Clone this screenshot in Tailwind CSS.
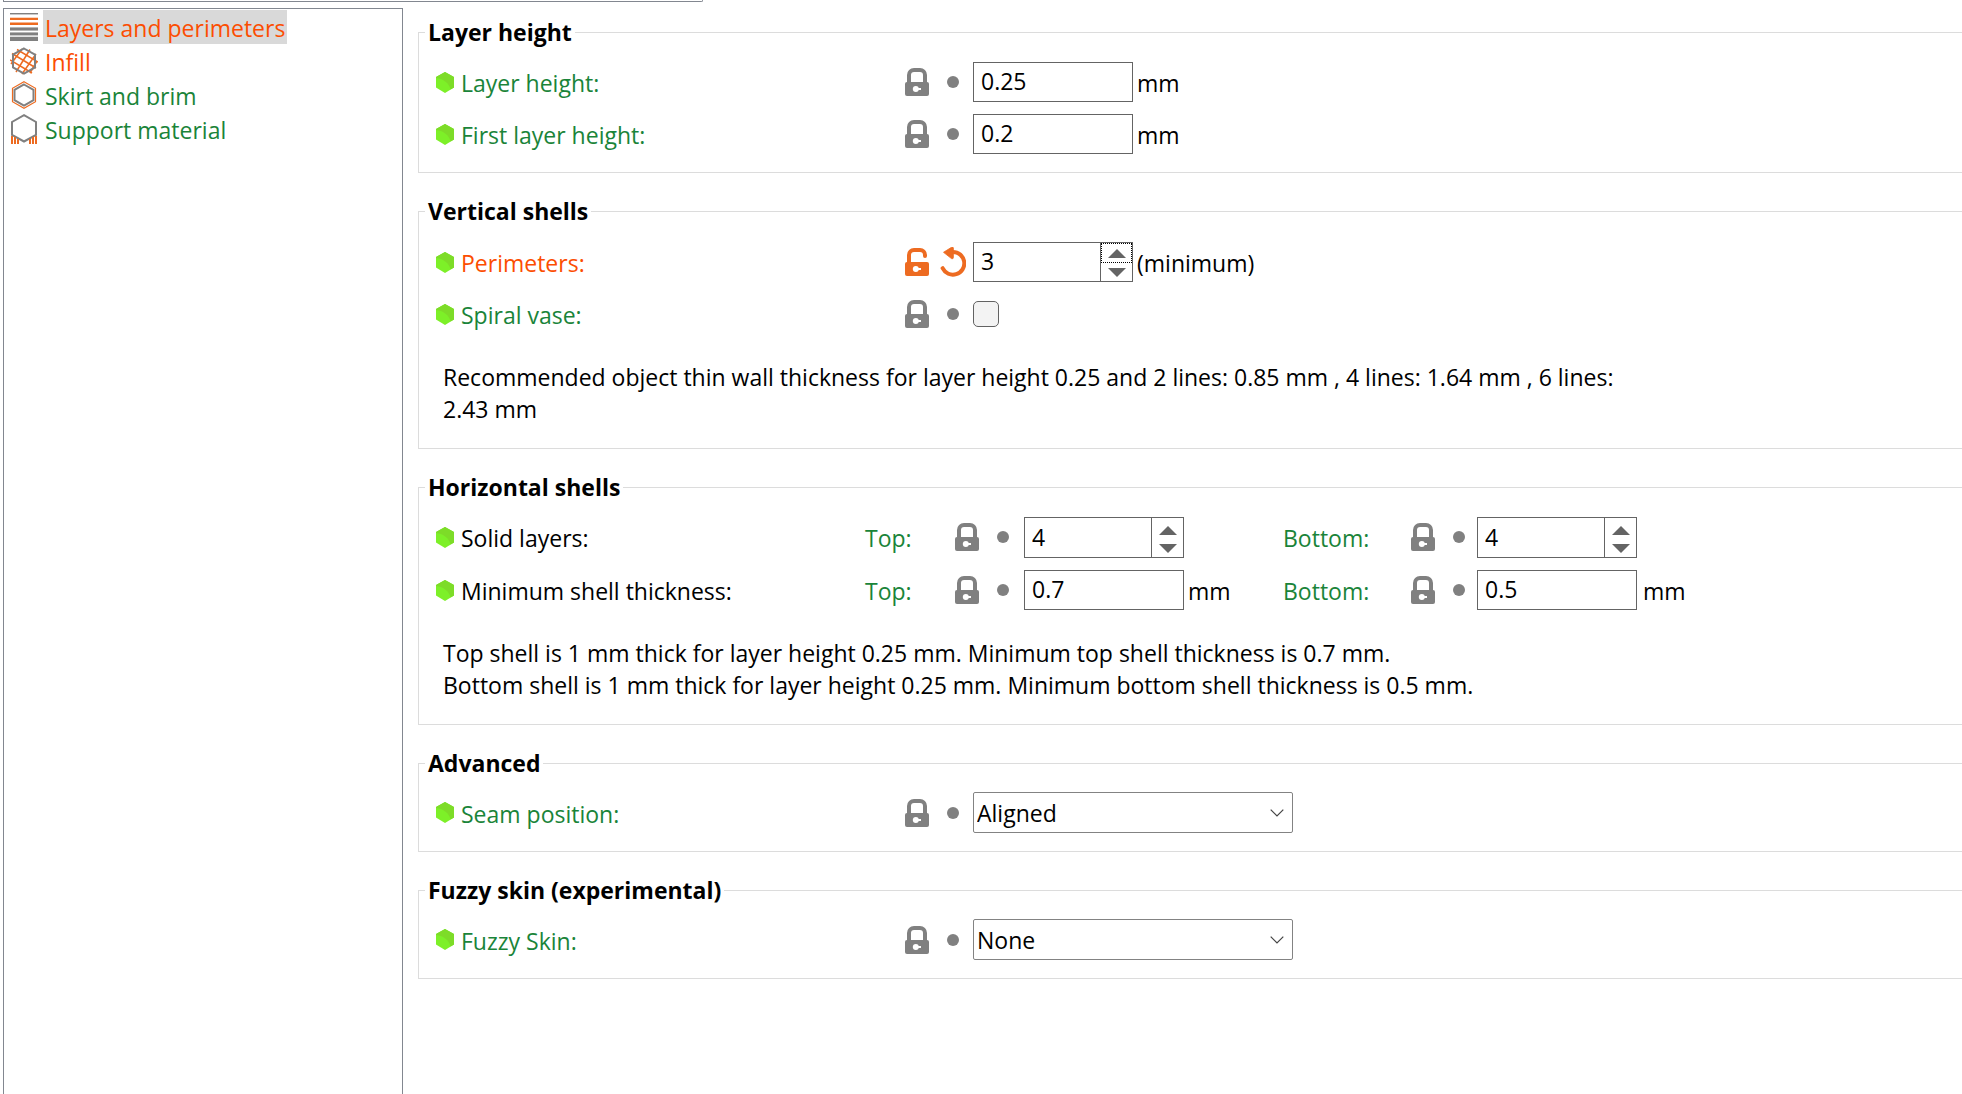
<!DOCTYPE html>
<html lang="en">
<head>
    <meta charset="UTF-8">
    <meta name="viewport" content="width=device-width, initial-scale=1.0">
    <title>Print Settings</title>
    <script src="https://cdn.jsdelivr.net/npm/@tailwindcss/browser@4"></script>
</head>
<body class="flex h-screen flex-col overflow-hidden bg-white font-['Open_Sans','Noto_Sans',sans-serif] text-[23px] leading-8 text-black">

    <!-- Shared icons -->
    <svg class="hidden">
        <symbol id="lock" viewBox="0 0 24 28">
            <path d="M4 15V7a5 5 0 0 1 5-5h6a5 5 0 0 1 5 5v8" fill="none" stroke="currentColor" stroke-width="4"/>
            <rect y="14" width="24" height="14" rx="2" fill="currentColor"/>
            <circle cx="10.8" cy="21" r="3" fill="#fff"/>
            <path d="M11 21h5" stroke="#fff" stroke-width="2"/>
        </symbol>
        <symbol id="unlock" viewBox="0 0 24 28">
            <path d="M4 15V7a5 5 0 0 1 5-5h6a5 5 0 0 1 5 5v1" fill="none" stroke="currentColor" stroke-width="4" stroke-linecap="round"/>
            <rect y="14" width="24" height="14" rx="2" fill="currentColor"/>
            <circle cx="10.8" cy="21" r="3" fill="#fff"/>
            <path d="M11 21h5" stroke="#fff" stroke-width="2"/>
        </symbol>
        <symbol id="undo" viewBox="0 0 26 30">
            <path d="M2.600 21.200A11.400 11.400 0 1 0 12.800 4.900" fill="none" stroke="currentColor" stroke-width="4" stroke-linecap="round"/>
            <path d="M3.500 5.300 11.500.3q1.800-.8 1.900.9v9.400q-.2 1.800-1.900 1z" fill="currentColor" stroke="currentColor" stroke-width=".8" stroke-linejoin="round"/>
        </symbol>
        <symbol id="dot" viewBox="0 0 26 30">
            <circle cx="13" cy="15" r="6" fill="currentColor"/>
        </symbol>
        <symbol id="bullet" viewBox="0 0 18 21">
            <path d="M9 0l9 5v10.500L9 21l-9-5.500V5z" fill="#7df028"/>
            <path d="M9 0l9 5v10.500l-3.500 2.100C13.500 12 8 6.500 0 6V5z" fill="#7ddc28"/>
        </symbol>
        <symbol id="up" viewBox="0 0 18 9"><path d="M9 0l9 9H0z" fill="#646464"/></symbol>
        <symbol id="down" viewBox="0 0 18 9"><path d="M0 0h18L9 9z" fill="#646464"/></symbol>
    </svg>

    <div class="ml-[3px] h-[2px] w-[700px] shrink-0 rounded-br-xs border-r border-b border-l border-[#828790]"></div>

    <div class="flex min-h-0 flex-1 gap-[15px] pt-[6px] pl-[3px]">
        <!-- Page tree -->
        <nav class="w-[400px] shrink-0 border-x border-t border-[#828790] pt-px pl-[6px]">
            <a href="#" class="flex h-[34px] items-center gap-[5px] text-[#fc4d01]">
                <svg class="size-7" viewBox="0 0 28 28">
                    <path d="M0 .5h28" stroke="#808080"/>
                    <path d="M0 1.500h28" stroke="#c8c8c8"/>
                    <path d="M0 4.500h28" stroke="#fbd5bf"/>
                    <path d="M0 6h28" stroke="#ed6b21" stroke-width="2"/>
                    <path d="M0 9.500h28" stroke="#f6b590"/>
                    <path d="M0 11h28" stroke="#ed6b21" stroke-width="2"/>
                    <path d="M0 14.500h28M0 17.500h28M0 19.500h28M0 23h28" stroke="#c8c8c8"/>
                    <path d="M0 16h28M0 21h28" stroke="#808080" stroke-width="2.500"/>
                    <path d="M0 26h28" stroke="#808080" stroke-width="4"/>
                </svg>
                <span class="h-full bg-[#d9d9d9] px-[2px] pt-[2px]">Layers and perimeters</span>
            </a>
            <a href="#" class="flex h-[34px] items-center gap-[5px] text-[#fc4d01]">
                <svg class="size-7" viewBox="0 0 28 28" fill="none">
                    <path d="M7 2.500 28 15M2 6.500 26 21M0 13 22 26M12 2 1 17M20 2.500 6 25M26 7 12 27M27 14 20 26" stroke="#ed6b21" stroke-width="1.500"/>
                    <path d="M14 1.500 25 7.700v12.600L14 26.500 3 20.300V7.700z" stroke="#808080" stroke-width="2"/>
                </svg>
                <span class="h-full px-[2px] pt-[2px]">Infill</span>
            </a>
            <a href="#" class="flex h-[34px] items-center gap-[5px] text-[#1a8439]">
                <svg class="size-7" viewBox="0 0 28 28" fill="none">
                    <path d="M14 .8 25.500 7.300v13.400L14 27.200 2.500 20.700V7.300z" stroke="#ed6b21" stroke-width="1.200"/>
                    <path d="M14 3.500 23.500 8.800v10.400L14 24.500 4.500 19.200V8.800z" stroke="#808080" stroke-width="2"/>
                </svg>
                <span class="h-full px-[2px] pt-[2px]">Skirt and brim</span>
            </a>
            <a href="#" class="flex h-[34px] items-center gap-[5px] text-[#1a8439]">
                <svg class="h-[30px] w-7" viewBox="0 0 28 30" fill="none">
                    <path d="M14 1.200 26 8v13L14 27.500 2 21V8z" stroke="#808080" stroke-width="2"/>
                    <path d="M2 22v8M5 23v7M8 25v5M20 25v5M23 23v7M26 22v8" stroke="#ed6b21" stroke-width="2"/>
                </svg>
                <span class="h-full px-[2px] pt-[2px]">Support material</span>
            </a>
        </nav>

        <!-- Option groups -->
        <main class="flex min-w-0 flex-1 flex-col gap-[22px] pt-2">
            <fieldset class="flex flex-col gap-3 border border-r-0 border-[#dcdcdc] pt-[14px] pb-[18px] pl-[17px]">
                <legend class="-ml-[11px] px-[3px] font-bold">Layer height</legend>
                <div class="flex h-10 items-center">
                    <svg class="h-[21px] w-[18px]"><use href="#bullet"/></svg>
                    <label for="layer-height" class="ml-[7px] w-[444px] pt-[2px] text-[#1a8439]">Layer height:</label>
                    <button class="mr-[11px] text-[#808080]" aria-label="Locked"><svg class="h-7 w-6"><use href="#lock"/></svg></button>
                    <button class="mr-[7px] text-[#808080]" aria-label="Unchanged"><svg class="h-[30px] w-[26px]"><use href="#dot"/></svg></button>
                    <input id="layer-height" type="text" value="0.25" class="h-10 w-[160px] border border-[#646464] px-[7px] pb-[2px] outline-none">
                    <span class="ml-1 pt-[2px]">mm</span>
                </div>
                <div class="flex h-10 items-center">
                    <svg class="h-[21px] w-[18px]"><use href="#bullet"/></svg>
                    <label for="first-layer-height" class="ml-[7px] w-[444px] pt-[2px] text-[#1a8439]">First layer height:</label>
                    <button class="mr-[11px] text-[#808080]" aria-label="Locked"><svg class="h-7 w-6"><use href="#lock"/></svg></button>
                    <button class="mr-[7px] text-[#808080]" aria-label="Unchanged"><svg class="h-[30px] w-[26px]"><use href="#dot"/></svg></button>
                    <input id="first-layer-height" type="text" value="0.2" class="h-10 w-[160px] border border-[#646464] px-[7px] pb-[2px] outline-none">
                    <span class="ml-1 pt-[2px]">mm</span>
                </div>
            </fieldset>

            <fieldset class="flex flex-col gap-3 border border-r-0 border-[#dcdcdc] pt-[15px] pb-[23px] pl-[17px]">
                <legend class="-ml-[11px] px-[3px] font-bold">Vertical shells</legend>
                <div class="flex h-10 items-center">
                    <svg class="h-[21px] w-[18px]"><use href="#bullet"/></svg>
                    <label for="perimeters" class="ml-[7px] w-[444px] pt-[2px] text-[#fc4d01]">Perimeters:</label>
                    <button class="mr-[11px] text-[#ed6b21]" aria-label="Unlocked"><svg class="h-7 w-6"><use href="#unlock"/></svg></button>
                    <button class="mr-[7px] text-[#ed6b21]" aria-label="Undo"><svg class="h-[30px] w-[26px]"><use href="#undo"/></svg></button>
                    <div class="flex h-10 w-[160px] border border-[#646464]">
                        <input id="perimeters" type="text" inputmode="numeric" value="3" class="min-w-0 flex-1 px-[7px] pb-[2px] outline-none">
                        <div class="flex w-8 flex-col border-l border-[#646464]">
                            <button class="flex flex-1 items-center justify-center border border-dotted border-black" aria-label="Increase"><svg class="h-[9px] w-[18px]"><use href="#up"/></svg></button>
                            <button class="flex flex-1 items-center justify-center" aria-label="Decrease"><svg class="h-[9px] w-[18px]"><use href="#down"/></svg></button>
                        </div>
                    </div>
                    <span class="ml-1 pt-[2px]">(minimum)</span>
                </div>
                <div class="flex h-10 items-center">
                    <svg class="h-[21px] w-[18px]"><use href="#bullet"/></svg>
                    <label for="spiral-vase" class="ml-[7px] w-[444px] pt-[2px] text-[#1a8439]">Spiral vase:</label>
                    <button class="mr-[11px] text-[#808080]" aria-label="Locked"><svg class="h-7 w-6"><use href="#lock"/></svg></button>
                    <button class="mr-[7px] text-[#808080]" aria-label="Unchanged"><svg class="h-[30px] w-[26px]"><use href="#dot"/></svg></button>
                    <input id="spiral-vase" type="checkbox" class="size-[26px] appearance-none rounded-[5px] border border-[#626262] bg-[#f3f3f3] checked:bg-[#808080]">
                </div>
                <p class="mt-[15px] max-w-[1220px] pl-[7px]">Recommended object thin wall thickness for layer height 0.25 and 2 lines: 0.85 mm , 4 lines: 1.64 mm , 6 lines: 2.43 mm</p>
            </fieldset>

            <fieldset class="flex flex-col gap-3 border border-r-0 border-[#dcdcdc] pt-[14px] pb-[23px] pl-[17px]">
                <legend class="-ml-[11px] px-[3px] font-bold">Horizontal shells</legend>
                <div class="mb-px flex h-10 items-center">
                    <svg class="h-[21px] w-[18px]"><use href="#bullet"/></svg>
                    <span class="ml-[7px] w-[404px] pt-[2px]">Solid layers:</span>
                    <label for="top-layers" class="w-[90px] pt-[2px] text-[#1a8439]">Top:</label>
                    <button class="mr-[11px] text-[#808080]" aria-label="Locked"><svg class="h-7 w-6"><use href="#lock"/></svg></button>
                    <button class="mr-2 text-[#808080]" aria-label="Unchanged"><svg class="h-[30px] w-[26px]"><use href="#dot"/></svg></button>
                    <div class="flex h-[41px] w-[160px] self-start border border-[#646464]">
                        <input id="top-layers" type="text" inputmode="numeric" value="4" class="min-w-0 flex-1 px-[7px] pb-[2px] outline-none">
                        <div class="flex w-8 flex-col border-l border-[#646464]">
                            <button class="flex flex-1 items-center justify-center pt-[3px]" aria-label="Increase"><svg class="h-[9px] w-[18px]"><use href="#up"/></svg></button>
                            <button class="flex flex-1 items-center justify-center" aria-label="Decrease"><svg class="h-[9px] w-[18px]"><use href="#down"/></svg></button>
                        </div>
                    </div>
                    <span class="w-[99px]"></span>
                    <label for="bottom-layers" class="w-[128px] pt-[2px] text-[#1a8439]">Bottom:</label>
                    <button class="mr-[11px] text-[#808080]" aria-label="Locked"><svg class="h-7 w-6"><use href="#lock"/></svg></button>
                    <button class="mr-[5px] text-[#808080]" aria-label="Unchanged"><svg class="h-[30px] w-[26px]"><use href="#dot"/></svg></button>
                    <div class="flex h-[41px] w-[160px] self-start border border-[#646464]">
                        <input id="bottom-layers" type="text" inputmode="numeric" value="4" class="min-w-0 flex-1 px-[7px] pb-[2px] outline-none">
                        <div class="flex w-8 flex-col border-l border-[#646464]">
                            <button class="flex flex-1 items-center justify-center pt-[3px]" aria-label="Increase"><svg class="h-[9px] w-[18px]"><use href="#up"/></svg></button>
                            <button class="flex flex-1 items-center justify-center" aria-label="Decrease"><svg class="h-[9px] w-[18px]"><use href="#down"/></svg></button>
                        </div>
                    </div>
                </div>
                <div class="flex h-10 items-center">
                    <svg class="h-[21px] w-[18px]"><use href="#bullet"/></svg>
                    <span class="ml-[7px] w-[404px] pt-[2px]">Minimum shell thickness:</span>
                    <label for="top-thickness" class="w-[90px] pt-[2px] text-[#1a8439]">Top:</label>
                    <button class="mr-[11px] text-[#808080]" aria-label="Locked"><svg class="h-7 w-6"><use href="#lock"/></svg></button>
                    <button class="mr-2 text-[#808080]" aria-label="Unchanged"><svg class="h-[30px] w-[26px]"><use href="#dot"/></svg></button>
                    <input id="top-thickness" type="text" value="0.7" class="h-10 w-[160px] border border-[#646464] px-[7px] pb-[2px] outline-none">
                    <span class="w-[99px] pt-[2px] pl-1">mm</span>
                    <label for="bottom-thickness" class="w-[128px] pt-[2px] text-[#1a8439]">Bottom:</label>
                    <button class="mr-[11px] text-[#808080]" aria-label="Locked"><svg class="h-7 w-6"><use href="#lock"/></svg></button>
                    <button class="mr-[5px] text-[#808080]" aria-label="Unchanged"><svg class="h-[30px] w-[26px]"><use href="#dot"/></svg></button>
                    <input id="bottom-thickness" type="text" value="0.5" class="h-10 w-[160px] border border-[#646464] px-[7px] pb-[2px] outline-none">
                    <span class="ml-[6px] pt-[2px]">mm</span>
                </div>
                <p class="mt-[15px] pl-[7px]">Top shell is 1 mm thick for layer height 0.25 mm. Minimum top shell thickness is 0.7 mm.<br>Bottom shell is 1 mm thick for layer height 0.25 mm. Minimum bottom shell thickness is 0.5 mm.</p>
            </fieldset>

            <fieldset class="border border-r-0 border-[#dcdcdc] pt-[13px] pb-[18px] pl-[17px]">
                <legend class="-ml-[11px] px-[3px] font-bold">Advanced</legend>
                <div class="flex h-[41px] items-center">
                    <svg class="h-[21px] w-[18px]"><use href="#bullet"/></svg>
                    <label for="seam-position" class="ml-[7px] w-[444px] pt-[2px] text-[#1a8439]">Seam position:</label>
                    <button class="mr-[11px] text-[#808080]" aria-label="Locked"><svg class="h-7 w-6"><use href="#lock"/></svg></button>
                    <button class="mr-[7px] text-[#808080]" aria-label="Unchanged"><svg class="h-[30px] w-[26px]"><use href="#dot"/></svg></button>
                    <div class="relative">
                        <select id="seam-position" class="block h-[41px] w-[320px] appearance-none rounded-xs border border-[#838383] px-[3px] outline-none">
                            <option>Aligned</option>
                            <option>Nearest</option>
                            <option>Rear</option>
                            <option>Random</option>
                        </select>
                        <svg class="pointer-events-none absolute top-[17px] right-[9px] h-2 w-[14px]" viewBox="0 0 14 8"><path d="M.7.7 7 7 13.300.7" fill="none" stroke="#444" stroke-width="1.200"/></svg>
                    </div>
                </div>
            </fieldset>

            <fieldset class="border border-r-0 border-[#dcdcdc] pt-[13px] pb-[18px] pl-[17px]">
                <legend class="-ml-[11px] px-[3px] font-bold">Fuzzy skin (experimental)</legend>
                <div class="flex h-[41px] items-center">
                    <svg class="h-[21px] w-[18px]"><use href="#bullet"/></svg>
                    <label for="fuzzy-skin" class="ml-[7px] w-[444px] pt-[2px] text-[#1a8439]">Fuzzy Skin:</label>
                    <button class="mr-[11px] text-[#808080]" aria-label="Locked"><svg class="h-7 w-6"><use href="#lock"/></svg></button>
                    <button class="mr-[7px] text-[#808080]" aria-label="Unchanged"><svg class="h-[30px] w-[26px]"><use href="#dot"/></svg></button>
                    <div class="relative">
                        <select id="fuzzy-skin" class="block h-[41px] w-[320px] appearance-none rounded-xs border border-[#838383] px-[3px] outline-none">
                            <option>None</option>
                            <option>Outside walls</option>
                            <option>All walls</option>
                        </select>
                        <svg class="pointer-events-none absolute top-[17px] right-[9px] h-2 w-[14px]" viewBox="0 0 14 8"><path d="M.7.7 7 7 13.300.7" fill="none" stroke="#444" stroke-width="1.200"/></svg>
                    </div>
                </div>
            </fieldset>
        </main>
    </div>
</body>
</html>
